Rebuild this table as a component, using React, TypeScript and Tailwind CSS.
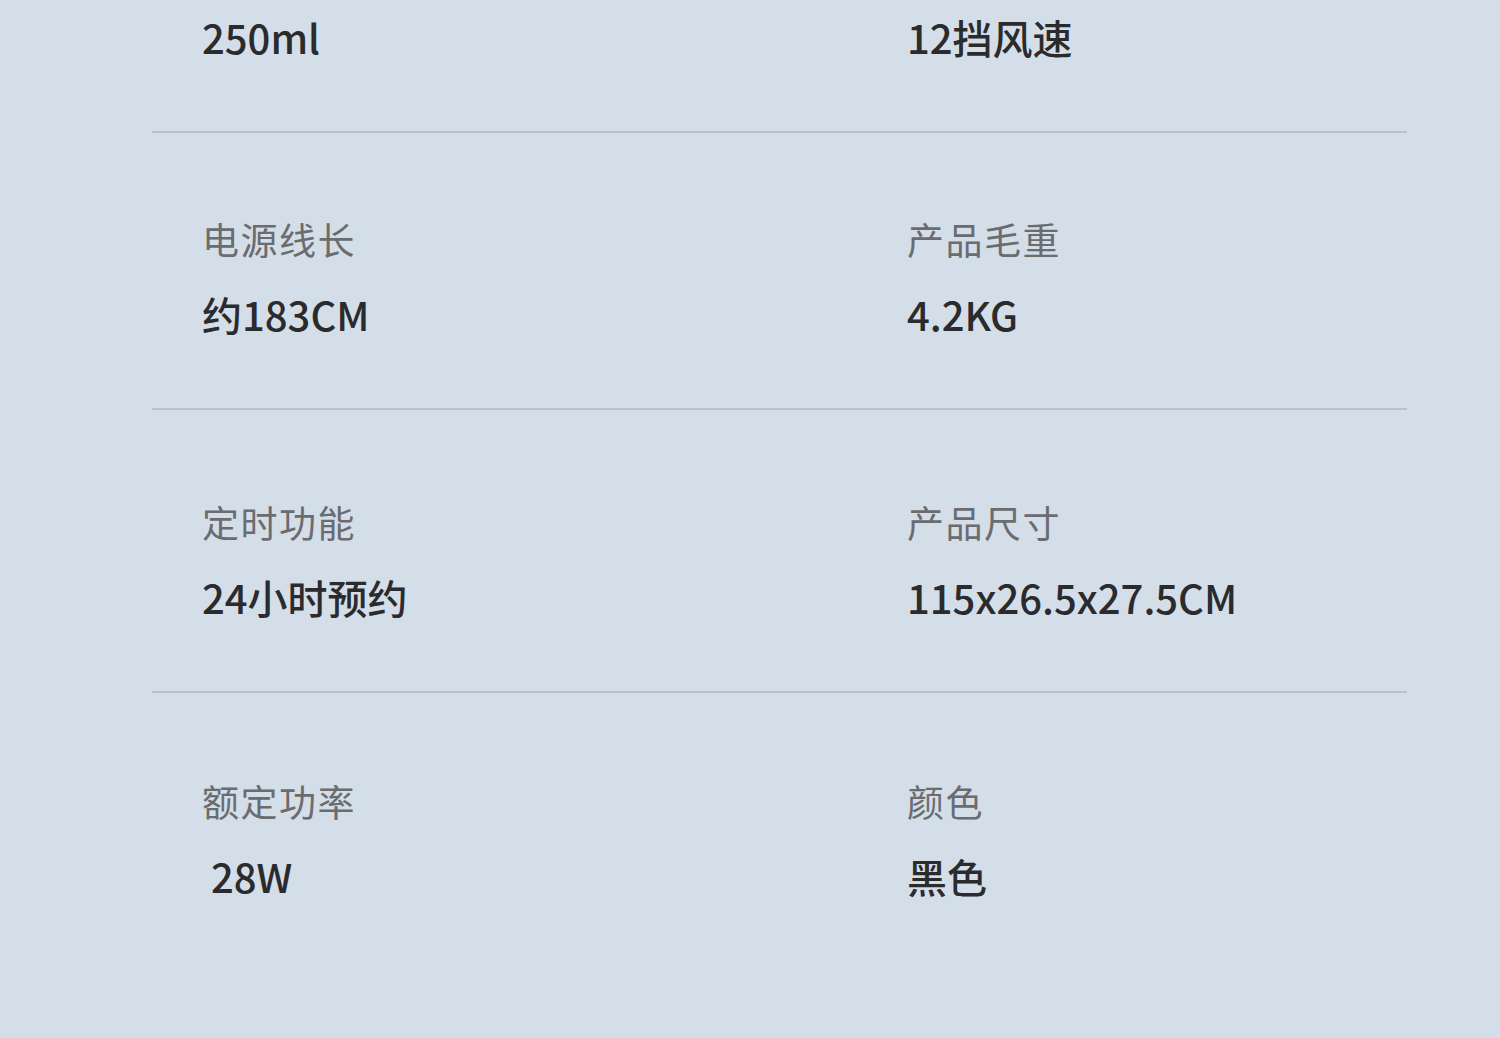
const rows = [
  { left: { label: "电源线长", value: "约183CM" }, right: { label: "产品毛重", value: "4.2KG" }, pad: "pt-[82px]" },
  { left: { label: "定时功能", value: "24小时预约" }, right: { label: "产品尺寸", value: "115x26.5x27.5CM" }, pad: "pt-[88px]" },
  { left: { label: "额定功率", value: "\u00a028W" }, right: { label: "颜色", value: "黑色" }, pad: "pt-[84px]" },
];

function Value({ value }: { value: string }) {
  return <div className="text-[40px] leading-[52px] font-medium text-[#2b2b2d] tracking-[0px]">{value}</div>;
}

function Spec({ label, value }: { label: string; value: string }) {
  return (
    <div className="flex flex-col gap-[25px]">
      <div className="text-[37px] leading-[48px] text-[#6a6c6f] tracking-[1.5px]">{label}</div>
      <Value value={value} />
    </div>
  );
}

export default function App() {
  return (
    <div
      className="w-[1500px] h-[1038px] overflow-hidden bg-[#d4dee9]"
      style={{ fontFamily: '"Noto Sans CJK SC", "Noto Sans", sans-serif' }}
    >
      <div className="mx-[152px] w-[1255px]">
        {/* top row is cut by the screenshot, only the values show */}
        <div className="grid grid-cols-[755px_1fr] pt-[11px] pb-[68px] border-b-2 border-[#bac3cd]">
          <div className="pl-[50px]">
            <Value value="250ml" />
          </div>
          <div>
            <Value value="12挡风速" />
          </div>
        </div>
        {rows.map((row, i) => (
          <div
            key={i}
            className={`grid grid-cols-[755px_1fr] ${row.pad} pb-[68px] ${i < rows.length - 1 ? "border-b-2 border-[#bac3cd]" : ""}`}
          >
            <div className="pl-[50px]">
              <Spec {...row.left} />
            </div>
            <div>
              <Spec {...row.right} />
            </div>
          </div>
        ))}
      </div>
    </div>
  );
}
